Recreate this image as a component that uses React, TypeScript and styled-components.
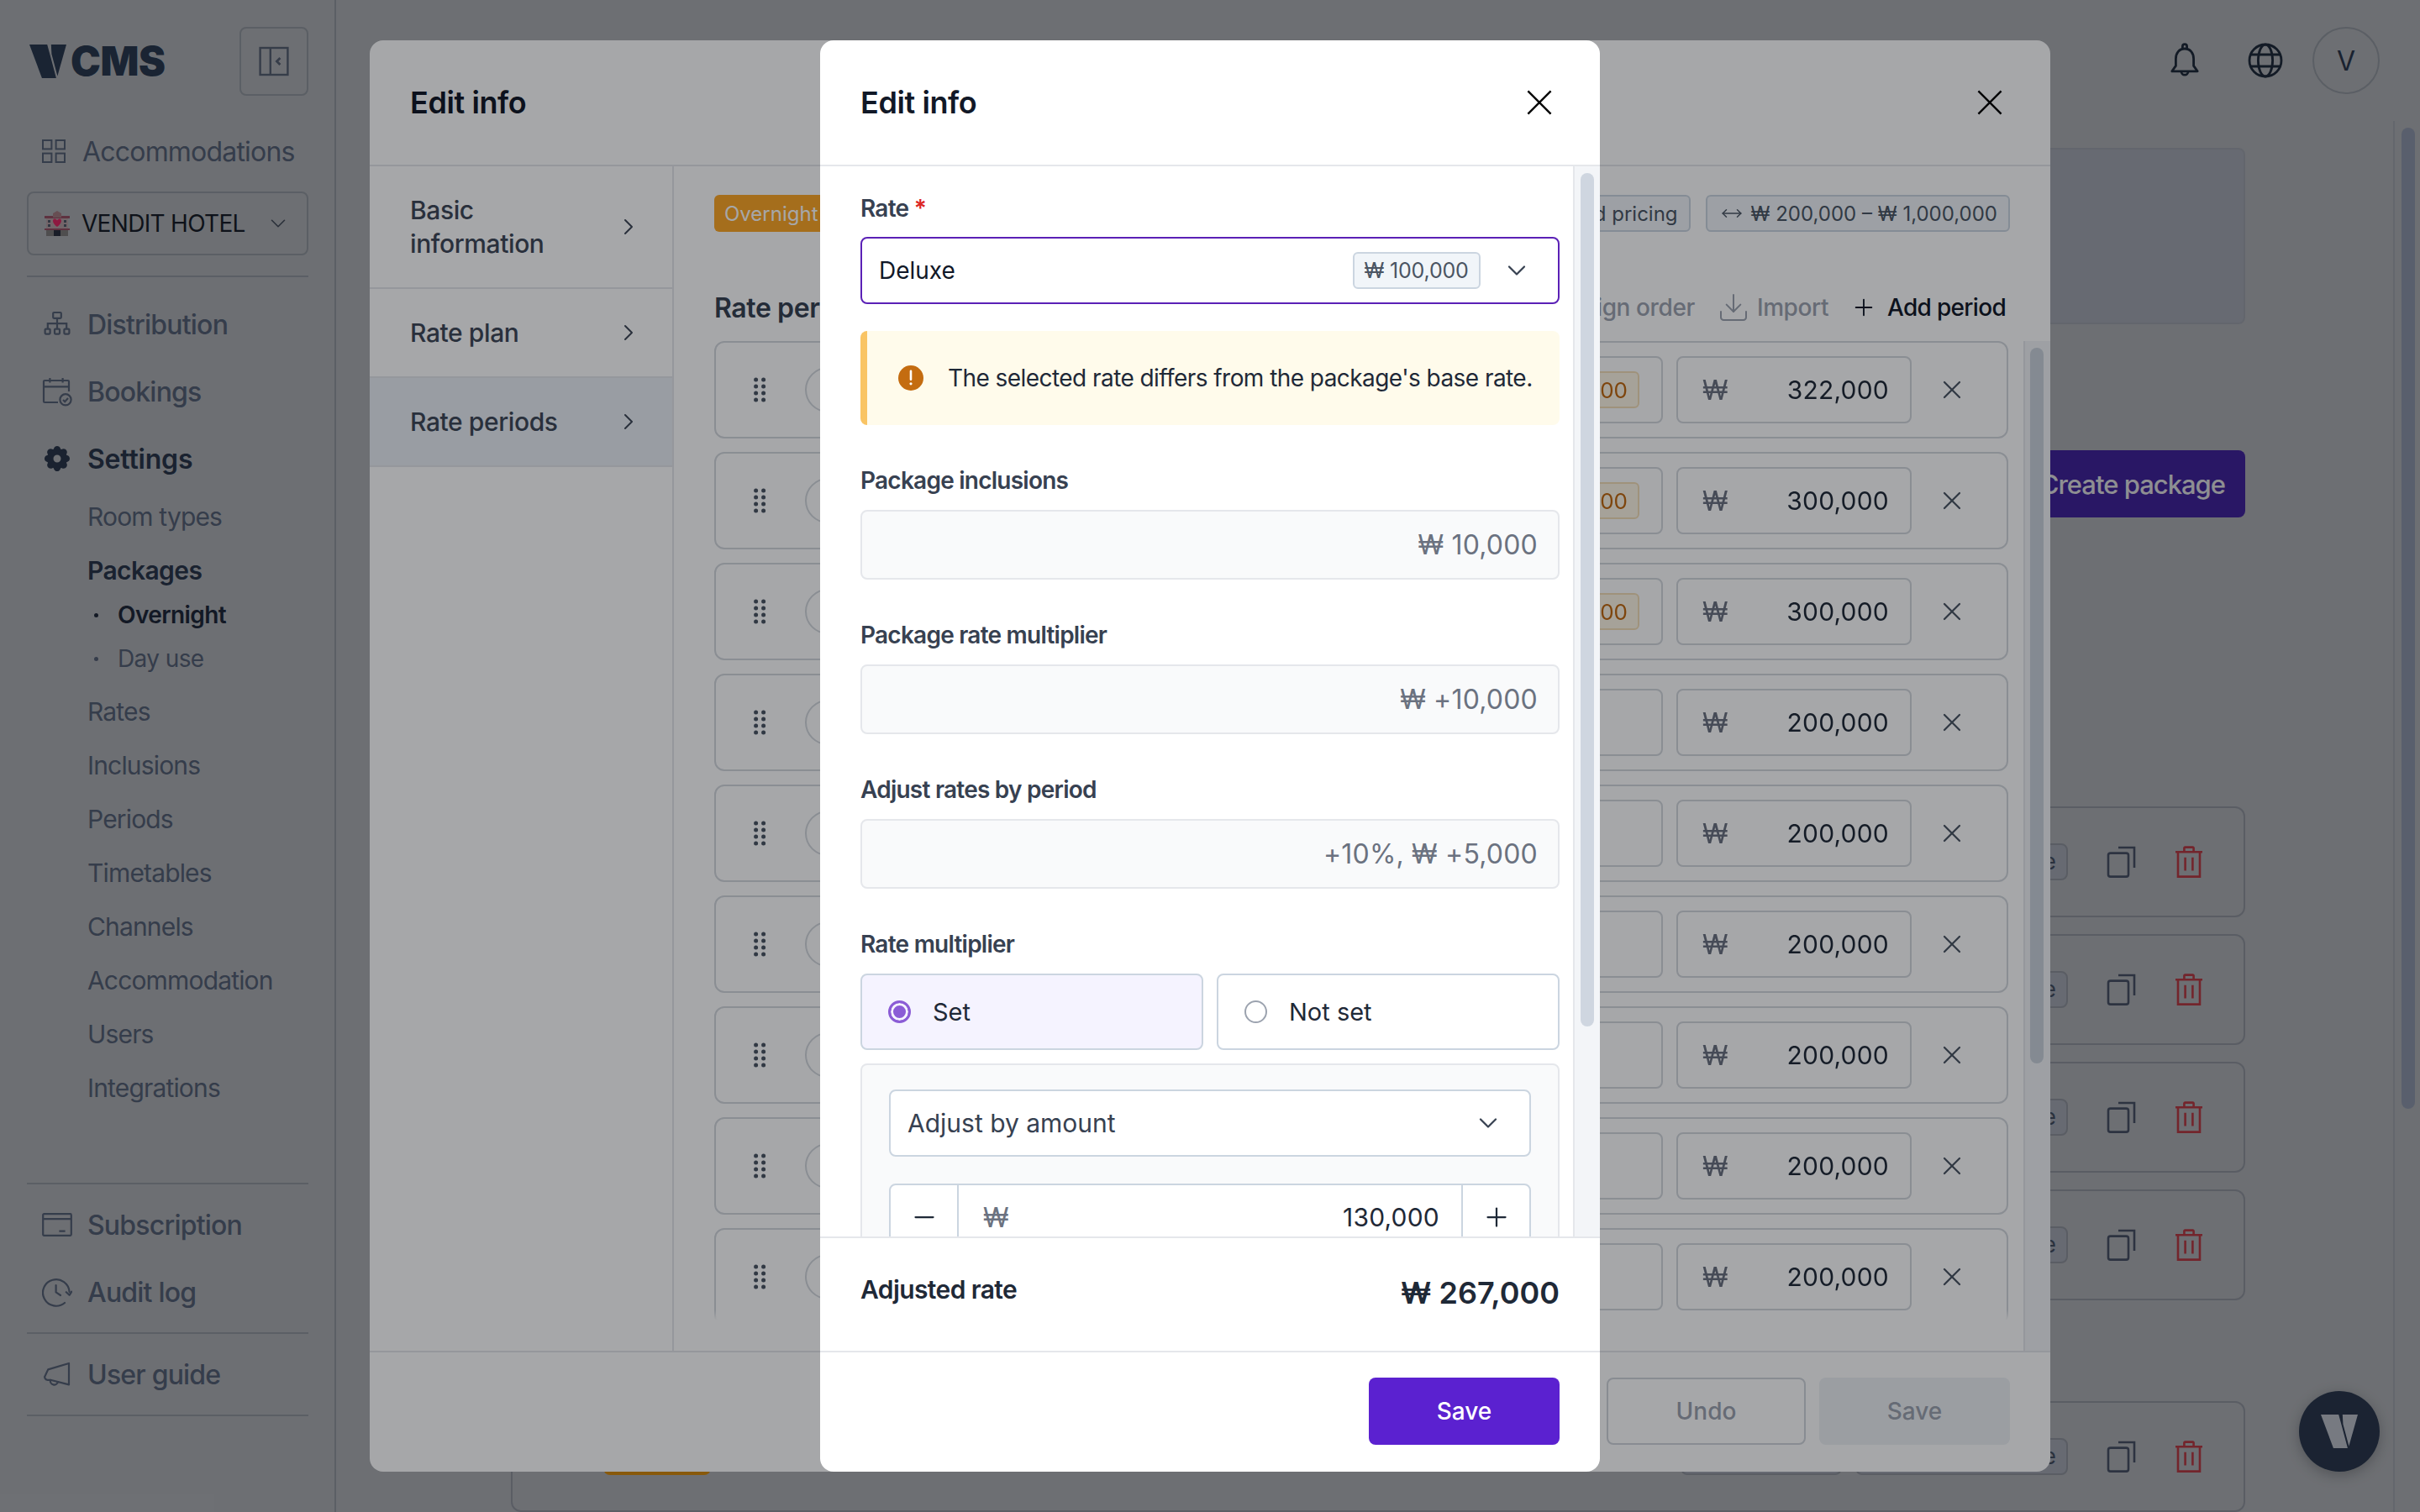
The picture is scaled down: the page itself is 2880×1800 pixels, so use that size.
import styled, { createGlobalStyle } from "styled-components";
import { ChevronDown, ChevronRight, Download, Minus, MoveHorizontal, Plus, X } from "lucide-react";
import { TbSettingsFilled } from "react-icons/tb";

const GlobalStyle = createGlobalStyle`
    * { box-sizing: border-box; }
    html, body { margin: 0; padding: 0; background: #6e6f73; }
    body { font-family: Inter, "Noto Sans", sans-serif; overflow: hidden; }
`

const periodRows = [
    { price: "322,000", badge: "₩ 22,000" },
    { price: "300,000", badge: "₩ 10,000" },
    { price: "300,000", badge: "₩ 10,000" },
    { price: "200,000" },
    { price: "200,000" },
    { price: "200,000" },
    { price: "200,000" },
    { price: "200,000" },
    { price: "200,000" },
];

const subItems = ["Timetables", "Channels", "Accommodation", "Users", "Integrations"];

const GridIcon = () => (
    <svg width="14" height="14" viewBox="0 0 14 14" fill="none" stroke="currentColor" strokeWidth="1">
        <rect x="0.5" y="0.5" width="5.2" height="5.2" />
        <rect x="8.3" y="0.5" width="5.2" height="5.2" />
        <rect x="0.5" y="8.3" width="5.2" height="5.2" />
        <rect x="8.3" y="8.3" width="5.2" height="5.2" />
    </svg>
);

const DistributionIcon = () => (
    <svg width="18" height="16" viewBox="0 0 18 16" fill="none" stroke="currentColor" strokeWidth="1.1">
        <rect x="6.6" y="1" width="4.8" height="3.4" rx="0.5" />
        <path d="M9 4.4V10.6M3.4 10.6V7.6H14.6V10.6" />
        <rect x="1.8" y="10.8" width="3" height="3" rx="0.5" />
        <rect x="7.5" y="10.8" width="3" height="3" rx="0.5" />
        <rect x="13.2" y="10.8" width="3" height="3" rx="0.5" />
    </svg>
);

const CalendarCheckIcon = () => (
    <svg width="18" height="18" viewBox="0 0 18 18" fill="none" stroke="currentColor" strokeWidth="1.1">
        <path d="M9.5 15.5H1.6A0.6 0.6 0 0 1 1 14.900V3.100A0.6 0.6 0 0 1 1.600 2.500H15.400A0.6 0.6 0 0 1 16 3.100V9" />
        <path d="M1 6.200H16M4.700 1V3.800M12.300 1V3.800" />
        <circle cx="14" cy="13.900" r="3.300" />
        <path d="M12.500 14L13.600 15.100L15.500 13" />
    </svg>
);

const CardIcon = () => (
    <svg width="18" height="14" viewBox="0 0 18 14" fill="none" stroke="currentColor" strokeWidth="1.1">
        <rect x="0.600" y="0.600" width="16.800" height="12.800" rx="0.600" />
        <path d="M0.600 3.600H17.400M10.200 10.800H13.800" />
    </svg>
);

const AuditIcon = () => (
    <svg width="18" height="18" viewBox="0 0 18 18" fill="none" stroke="currentColor" strokeWidth="1.1" strokeLinecap="round" strokeLinejoin="round">
        <path d="M16.300 9A7.900 7.900 0 1 0 13.500 15.500" />
        <path d="M8.300 5V9.200L11 11M14.400 9.100L16.300 10.900L17.600 8.800" />
    </svg>
);

const MegaphoneIcon = () => (
    <svg width="18" height="16" viewBox="0 0 18 16" fill="none" stroke="currentColor" strokeWidth="1.1" strokeLinejoin="round" strokeLinecap="round">
        <path d="M16 1.500V14.200L5 11.400H3.300A1.700 1.700 0 0 1 2 8.600L3.600 5.200L16 1.500Z" />
        <path d="M5 11.400A2.300 2.300 0 0 0 9.500 12.500" />
    </svg>
);

const PanelCollapseIcon = () => (
    <svg width="18" height="18" viewBox="0 0 18 18" fill="none" stroke="currentColor" strokeWidth="1.2">
        <rect x="0.800" y="1" width="16.400" height="16" />
        <path d="M6.900 1V17" />
        <path d="M12.700 7L10.700 9L12.700 11" strokeWidth="1.400" />
    </svg>
);

const HotelEmoji = () => (
    <svg width="16" height="16" viewBox="0 0 32 32">
        <path d="M1 7H31V10H1Z" fill="#a9586c" />
        <path d="M11 4L16 1L21 4V9H11Z" fill="#b98a8f" />
        <rect x="3" y="10" width="26" height="19" fill="#cdb3b5" />
        <path d="M16 20C10 16 10 10.500 13 10.500C14.500 10.500 15.500 11.500 16 12.500C16.500 11.500 17.500 10.500 19 10.500C22 10.500 22 16 16 20Z" fill="#ff2a6d" />
        <path d="M5 12H8V15H5ZM5 17H8V20H5ZM24 12H27V15H24ZM24 17H27V20H24Z" fill="#5a6270" />
        <rect x="1" y="22" width="30" height="2" fill="#a9586c" />
        <path d="M3 24H29V31H3Z" fill="#8d8a86" />
        <path d="M12 24H20V31H12Z" fill="#2c3240" />
    </svg>
);

const VMark = ({ size, color }: { size: number; color: string }) => (
    <svg width={size} height={size * 0.925} viewBox="0 0 133 123" fill={color}>
        <path d="M0 0H64L76 44L97 123H46Z" />
        <path d="M78 0H133L101 113L80 35Z" />
    </svg>
);

const BellIcon = () => (
    <svg width="24" height="24" viewBox="0 0 24 24" fill="none" stroke="currentColor" strokeWidth="1.400" strokeLinejoin="round">
        <path d="M12 5C8.500 5 6.700 7.800 6.700 11V15.200L4.400 18.400H19.600L17.300 15.200V11C17.300 7.800 15.500 5 12 5Z" />
        <path d="M10.700 5V3.600A1.300 1.300 0 0 1 13.300 3.600V5" />
        <path d="M10 18.600A2 2 0 0 0 14 18.600" />
    </svg>
);

const GlobeIcon = () => (
    <svg width="24" height="24" viewBox="0 0 24 24" fill="none" stroke="currentColor" strokeWidth="1.400">
        <circle cx="12" cy="12" r="9.500" />
        <ellipse cx="12" cy="12" rx="4.300" ry="9.500" />
        <path d="M3.500 8.500H20.500M3.500 15.500H20.500" />
    </svg>
);

const CopyIcon = () => (
    <svg width="18" height="19" viewBox="0 0 18 19" fill="none" stroke="currentColor" strokeWidth="1.300">
        <rect x="1" y="4.300" width="12" height="14" rx="1.300" />
        <path d="M7 1H16.500V13" />
    </svg>
);

const TrashIcon = () => (
    <svg width="16" height="19" viewBox="0 0 16 19" fill="none" stroke="currentColor" strokeWidth="1.300">
        <path d="M0 3.600H16M5.200 3.600V1.300A0.500 0.500 0 0 1 5.700 0.800H10.300A0.500 0.500 0 0 1 10.800 1.300V3.600" />
        <path d="M1.500 3.600V18.300H14.500V3.600" />
        <path d="M5.800 6.900V14.800M10.200 6.900V14.800" />
    </svg>
);

const DragIcon = () => (
    <svg width="9" height="16" viewBox="0 0 9 16" fill="currentColor">
        {[2, 6, 10, 14].map((y) => (
            <g key={y}>
                <circle cx="1.800" cy={y} r="1.250" />
                <circle cx="6.300" cy={y} r="1.250" />
            </g>
        ))}
    </svg>
);

const WarnIcon = () => (
    <svg width="15" height="15" viewBox="0 0 15 15">
        <circle cx="7.500" cy="7.500" r="7.500" fill="#c46c10" />
        <path d="M7.500 3.400V8.400" stroke="#fff" strokeWidth="1.300" strokeLinecap="round" />
        <circle cx="7.500" cy="10.900" r="0.800" fill="#fff" />
    </svg>
);

const CloseIcon = () => (
    <svg width="16" height="16" viewBox="0 0 16 16" fill="none" stroke="currentColor" strokeWidth="1.200">
        <path d="M1.200 1.200L14.800 14.800M14.800 1.200L1.200 14.800" />
    </svg>
);

const App = () => {
    return (
        <Screen>
            <GlobalStyle />
            <Sidebar>
                <SidebarHead>
                    <Logo>
                        <VMark size={22} color="#2d3e54" />
                        <LogoText>CMS</LogoText>
                    </Logo>
                    <CollapseButton><PanelCollapseIcon /></CollapseButton>
                </SidebarHead>
                <TopLink><GridIcon />Accommodations</TopLink>
                <HotelSelect>
                    <HotelEmoji />
                    <HotelName>VENDIT HOTEL</HotelName>
                    <ChevronDown size={15} strokeWidth={1.3} color="#4b5360" />
                </HotelSelect>
                <SideDivider $top={12} />
                <NavGroup>
                    <NavItem><IconSlot><DistributionIcon /></IconSlot>Distribution</NavItem>
                    <NavItem><IconSlot><CalendarCheckIcon /></IconSlot>Bookings</NavItem>
                    <NavItem $active><IconSlot><TbSettingsFilled size={22} /></IconSlot>Settings</NavItem>
                </NavGroup>
                <SubList>
                    <SubItem>Room types</SubItem>
                    <SubItem $active>Packages</SubItem>
                    <NestedList>
                        <NestedItem $active>Overnight</NestedItem>
                        <NestedItem>Day use</NestedItem>
                    </NestedList>
                    <SubItem>Rates</SubItem>
                    <SubItem>Inclusions</SubItem>
                    <SubItem>Periods</SubItem>
                    {subItems.map((item) => (
                        <SubItem key={item}>{item}</SubItem>
                    ))}
                </SubList>
                <SidebarFoot>
                    <SideDivider $top={0} />
                    <FootGroup>
                        <NavItem><IconSlot><CardIcon /></IconSlot>Subscription</NavItem>
                        <NavItem><IconSlot><AuditIcon /></IconSlot>Audit log</NavItem>
                    </FootGroup>
                    <SideDivider $top={0} />
                    <FootGroup>
                        <NavItem><IconSlot><MegaphoneIcon /></IconSlot>User guide</NavItem>
                    </FootGroup>
                    <SideDivider $top={0} />
                </SidebarFoot>
            </Sidebar>

            <Main>
                <Topbar>
                    <TopIcons>
                        <BellIcon />
                        <GlobeIcon />
                    </TopIcons>
                    <Avatar>V</Avatar>
                </Topbar>
                <MainBody>
                    <Content>
                        <InfoPanel />
                        <SectionHead>
                            <CreateButton>Create package</CreateButton>
                        </SectionHead>
                        <PackageList>
                            {[0, 1, 2, 3].map((i) => (
                                <PackageCard key={i}>
                                    <TypeChip>Overnight</TypeChip>
                                    <CardChip $width={96}>₩ 100,000</CardChip>
                                    <CardChip $width={126.500}>Base rate</CardChip>
                                    <CardTools><CopyIcon /><TrashSlot><TrashIcon /></TrashSlot></CardTools>
                                </PackageCard>
                            ))}
                        </PackageList>
                        <LastCard>
                            <TypeChip>Overnight</TypeChip>
                            <CardChip $width={96}>₩ 100,000</CardChip>
                            <CardChip $width={126.500}>Base rate</CardChip>
                            <CardTools><CopyIcon /><TrashSlot><TrashIcon /></TrashSlot></CardTools>
                        </LastCard>
                    </Content>
                    <PageTrack><PageThumb /></PageTrack>
                </MainBody>
            </Main>

            <Widget><VMark size={22} color="#d6dae1" /></Widget>
            <Backdrop $alpha={0.15} />

            <OuterDialog>
                <DialogHead>
                    <DialogTitle>Edit info</DialogTitle>
                    <CloseIcon />
                </DialogHead>
                <OuterBody>
                    <SideTabs>
                        <SideTab><TabLabel>Basic information</TabLabel><ChevronRight size={16} strokeWidth={1.500} /></SideTab>
                        <SideTab><TabLabel>Rate plan</TabLabel><ChevronRight size={16} strokeWidth={1.500} /></SideTab>
                        <SideTab $active><TabLabel>Rate periods</TabLabel><ChevronRight size={16} strokeWidth={1.500} /></SideTab>
                    </SideTabs>
                    <PeriodPane>
                        <ChipRow>
                            <OrangeChip>Overnight</OrangeChip>
                            <GreyChip $pushed>Fixed pricing</GreyChip>
                            <GreyChip><MoveHorizontal size={13} strokeWidth={1.300} />₩ 200,000 – ₩ 1,000,000</GreyChip>
                        </ChipRow>
                        <PeriodHead>
                            <PeriodTitle>Rate periods</PeriodTitle>
                            <PeriodActions>
                                <GhostAction>Assign order</GhostAction>
                                <GhostAction><Download size={20} strokeWidth={1.200} />Import</GhostAction>
                                <AddAction><Plus size={16} strokeWidth={1.400} />Add period</AddAction>
                            </PeriodActions>
                        </PeriodHead>
                        <PeriodArea>
                            <PeriodList>
                                {periodRows.map((row, index) => (
                                    <PeriodRow key={index}>
                                        <DragSlot><DragIcon /></DragSlot>
                                        <RowCircle />
                                        <RowField>
                                            {row.badge && <RowBadge>{row.badge}</RowBadge>}
                                        </RowField>
                                        <PriceField>
                                            <Won>₩</Won>
                                            <PriceValue>{row.price}</PriceValue>
                                        </PriceField>
                                        <RowRemove><X size={18} strokeWidth={1.500} /></RowRemove>
                                    </PeriodRow>
                                ))}
                            </PeriodList>
                            <PaneTrack><PaneThumb /></PaneTrack>
                        </PeriodArea>
                    </PeriodPane>
                </OuterBody>
                <DialogFoot>
                    <UndoButton>Undo</UndoButton>
                    <DisabledSave>Save</DisabledSave>
                </DialogFoot>
            </OuterDialog>

            <Backdrop $alpha={0.352} />

            <InnerDialog>
                <DialogHead>
                    <DialogTitle>Edit info</DialogTitle>
                    <CloseIcon />
                </DialogHead>
                <InnerScroll>
                    <Form>
                        <Label>Rate <Req>*</Req></Label>
                        <RateSelect>
                            <RateName>Deluxe</RateName>
                            <RatePrice>₩ 100,000</RatePrice>
                            <ChevronDown size={18} strokeWidth={1.500} color="#374151" />
                        </RateSelect>
                        <Alert>
                            <WarnIcon />
                            <AlertText>The selected rate differs from the package's base rate.</AlertText>
                        </Alert>
                        <Field>
                            <Label>Package inclusions</Label>
                            <ReadOnlyInput>₩ 10,000</ReadOnlyInput>
                        </Field>
                        <Field>
                            <Label>Package rate multiplier</Label>
                            <ReadOnlyInput>₩ +10,000</ReadOnlyInput>
                        </Field>
                        <Field>
                            <Label>Adjust rates by period</Label>
                            <ReadOnlyInput>+10%, ₩ +5,000</ReadOnlyInput>
                        </Field>
                        <Field>
                            <Label>Rate multiplier</Label>
                            <RadioRow>
                                <RadioCard $checked><RadioDot $checked />Set</RadioCard>
                                <RadioCard><RadioDot />Not set</RadioCard>
                            </RadioRow>
                        </Field>
                        <AdjustPanel>
                            <AdjustSelect>
                                Adjust by amount
                                <ChevronDown size={18} strokeWidth={1.500} color="#374151" />
                            </AdjustSelect>
                            <Stepper>
                                <StepCell><Minus size={18} strokeWidth={1.500} /></StepCell>
                                <StepValue>
                                    <Won>₩</Won>
                                    <PriceValue>130,000</PriceValue>
                                </StepValue>
                                <StepCell><Plus size={18} strokeWidth={1.500} /></StepCell>
                            </Stepper>
                        </AdjustPanel>
                    </Form>
                    <FormTrack><FormThumb /></FormTrack>
                </InnerScroll>
                <Summary>
                    <SummaryLabel>Adjusted rate</SummaryLabel>
                    <SummaryValue>₩ 267,000</SummaryValue>
                </Summary>
                <DialogFoot>
                    <SaveButton>Save</SaveButton>
                </DialogFoot>
            </InnerDialog>
        </Screen>
    );
}

export default App;

const Screen = styled.div`
    zoom: 2;
    position: relative;
    display: flex;
    width: 1440px;
    height: 900px;
    overflow: hidden;
    background-color: #c4c6c8;
    color: #1f2937;
    font-size: 14px;
`

const Sidebar = styled.aside`
    width: 200px;
    flex-shrink: 0;
    display: flex;
    flex-direction: column;
    padding: 16px 15.500px 57px 16px;
    border-right: 1px solid #a3a8ae;
`

const SidebarHead = styled.div`
    display: flex;
    align-items: center;
    justify-content: space-between;
    padding-left: 1.500px;
`

const Logo = styled.div`
    display: flex;
    align-items: center;
    gap: 2.500px;
    color: #2d3e54;
`

const LogoText = styled.span`
    font-size: 24px;
    line-height: 24px;
    font-weight: 900;
    letter-spacing: -0.200px;
`

const CollapseButton = styled.button`
    width: 41px;
    height: 41px;
    display: flex;
    align-items: center;
    justify-content: center;
    padding: 0;
    color: #606a7c;
    background: transparent;
    border: 1px solid #a3a8ae;
    border-radius: 4px;
`

const TopLink = styled.div`
    height: 32px;
    margin-top: 17px;
    padding-left: 9px;
    display: flex;
    align-items: center;
    gap: 10px;
    font-size: 16px;
    font-weight: 400;
    letter-spacing: -0.400px;
    color: #5f6a7f;
`

const HotelSelect = styled.div`
    height: 38px;
    margin-top: 8px;
    padding: 0 9.500px 0 9px;
    display: flex;
    align-items: center;
    gap: 6.500px;
    border: 1px solid #a3a8ae;
    border-radius: 4px;
`

const HotelName = styled.span`
    flex: 1;
    font-size: 14px;
    letter-spacing: -0.350px;
    white-space: nowrap;
    color: #181d26;
`

const SideDivider = styled.div<{ $top: number }>`
    height: 1px;
    flex-shrink: 0;
    margin-top: ${(props) => props.$top}px;
    background-color: #a3a8ae;
`

const NavGroup = styled.nav`
    margin-top: 8px;
`

const NavItem = styled.div<{ $active?: boolean }>`
    height: 40px;
    padding-left: 9px;
    display: flex;
    align-items: center;
    gap: 9px;
    font-size: 16px;
    font-weight: ${(props) => (props.$active ? 600 : 500)};
    letter-spacing: ${(props) => (props.$active ? "-0.100px" : "-0.400px")};
    color: ${(props) => (props.$active ? "#2d3a4e" : "#5f6a7f")};
`

const IconSlot = styled.span`
    width: 18px;
    display: flex;
    justify-content: center;
`

const SubList = styled.div`
    margin-top: -1.500px;
`

const SubItem = styled.div<{ $active?: boolean }>`
    height: 32px;
    padding-left: 36px;
    display: flex;
    align-items: center;
    font-size: 15px;
    font-weight: ${(props) => (props.$active ? 600 : 400)};
    letter-spacing: ${(props) => (props.$active ? "-0.300px" : "-0.420px")};
    color: ${(props) => (props.$active ? "#2d3a4e" : "#5f6a7f")};
`

const NestedList = styled.div`
    margin: -2.500px 0 2.500px;
`

const NestedItem = styled.div<{ $active?: boolean }>`
    height: 26px;
    padding-left: 40px;
    display: flex;
    align-items: center;
    gap: 11.500px;
    font-size: 14px;
    font-weight: ${(props) => (props.$active ? 600 : 400)};
    letter-spacing: -0.300px;
    color: ${(props) => (props.$active ? "#222b3a" : "#5f6a7f")};

    &::before {
        content: "";
        width: 2.500px;
        height: 2.500px;
        border-radius: 50%;
        background-color: currentColor;
    }
`

const SidebarFoot = styled.div`
    margin-top: auto;
`

const FootGroup = styled.div`
    padding: 4px 0;
`

const Main = styled.main`
    flex: 1;
    min-width: 0;
    display: flex;
    flex-direction: column;
`

const Topbar = styled.header`
    height: 72px;
    flex-shrink: 0;
    padding-right: 24px;
    display: flex;
    align-items: center;
    justify-content: flex-end;
    gap: 16px;
`

const TopIcons = styled.div`
    display: flex;
    align-items: center;
    gap: 24px;
    color: #222d3d;
`

const Avatar = styled.div`
    width: 40px;
    height: 40px;
    display: flex;
    align-items: center;
    justify-content: center;
    border: 1px solid #a3a8ae;
    border-radius: 50%;
    font-size: 16px;
    color: #2d3a4e;
`

const MainBody = styled.div`
    flex: 1;
    min-height: 0;
    display: flex;
`

const Content = styled.div`
    flex: 1;
    min-width: 0;
    padding: 16px 88px 0 104px;
    overflow: hidden;
`

const InfoPanel = styled.div`
    height: 105px;
    background-color: #b9bdc6;
    border: 1px solid #b2b6be;
    border-radius: 4px;
`

const SectionHead = styled.div`
    margin-top: 75px;
    display: flex;
    justify-content: flex-end;
`

const CreateButton = styled.button`
    height: 40px;
    padding: 0 12px;
    color: #fff;
    font-family: inherit;
    font-size: 15.500px;
    font-weight: 500;
    letter-spacing: -0.500px;
    background-color: #4926af;
    border: none;
    border-radius: 4px;
`

const PackageList = styled.div`
    margin-top: 172px;
    display: flex;
    flex-direction: column;
    gap: 10px;
`

const PackageCard = styled.div`
    height: 66px;
    padding: 0 24.500px 0 54px;
    display: flex;
    align-items: center;
    gap: 8px;
    border: 1px solid #a1a5ad;
    border-radius: 6px;
`

const LastCard = styled(PackageCard)`
    margin-top: 60px;
`

const TypeChip = styled.span`
    height: 22px;
    width: 64px;
    margin-right: auto;
    background-color: #f59e0b;
    border-radius: 4px;
    font-size: 12px;
    color: #fff;
    line-height: 22px;
    text-align: center;
`

const CardChip = styled.span<{ $width: number }>`
    height: 22px;
    width: ${(props) => props.$width}px;
    padding: 0 6px;
    background-color: #b9bdc6;
    border: 1px solid #a1a5ad;
    border-radius: 4px;
    font-size: 13px;
    line-height: 20px;
    color: #4d5666;
    text-align: right;
`

const CardTools = styled.div`
    margin-left: 15px;
    display: flex;
    align-items: center;
    color: #4f5a6e;
`

const TrashSlot = styled.span`
    margin-left: 23px;
    display: flex;
    color: #cf4048;
`

const PageTrack = styled.div`
    width: 16px;
    flex-shrink: 0;
    padding: 4px 0 0 4px;
    border-left: 1px solid #b2b6be;
`

const PageThumb = styled.div`
    width: 8px;
    height: 584px;
    background-color: #a0a9bc;
    border-radius: 4px;
`

const Widget = styled.div`
    position: absolute;
    right: 24px;
    bottom: 24px;
    width: 48px;
    height: 48px;
    display: flex;
    align-items: center;
    justify-content: center;
    background-color: #2f3d53;
    border-radius: 50%;
    box-shadow: 0 2px 8px rgba(0, 0, 0, 0.25);
`

const Backdrop = styled.div<{ $alpha: number }>`
    position: absolute;
    inset: 0;
    background-color: rgba(4, 6, 12, ${(props) => props.$alpha});
`

const OuterDialog = styled.section`
    position: absolute;
    left: 220px;
    top: 24px;
    width: 1000px;
    height: 852px;
    display: flex;
    flex-direction: column;
    background-color: #fff;
    border-radius: 8px;
    overflow: hidden;
`

const InnerDialog = styled(OuterDialog)`
    left: 488px;
    width: 464px;
`

const DialogHead = styled.div`
    height: 75px;
    flex-shrink: 0;
    padding: 0 28px 0 24px;
    display: flex;
    align-items: center;
    justify-content: space-between;
    border-bottom: 1px solid #e5e7eb;
    color: #000;
`

const DialogTitle = styled.h2`
    margin: 0;
    font-size: 18px;
    font-weight: 600;
    letter-spacing: -0.200px;
    color: #111827;
`

const OuterBody = styled.div`
    flex: 1;
    min-height: 0;
    display: flex;
`

const SideTabs = styled.div`
    width: 181px;
    flex-shrink: 0;
    border-right: 1px solid #e5e7eb;
`

const SideTab = styled.div<{ $active?: boolean }>`
    padding: 16px 18px 16px 24px;
    display: flex;
    align-items: center;
    justify-content: space-between;
    border-bottom: 1px solid #e5e7eb;
    background-color: ${(props) => (props.$active ? "#ebf0f6" : "transparent")};
    color: #3f4857;
`

const TabLabel = styled.span`
    width: 110px;
    font-size: 15px;
    font-weight: 500;
    line-height: 20px;
    letter-spacing: -0.200px;
    color: #3f4857;
`

const PeriodPane = styled.div`
    flex: 1;
    min-width: 0;
    padding: 17px 0 0 24px;
    display: flex;
    flex-direction: column;
`

const ChipRow = styled.div`
    height: 22px;
    margin-right: 24px;
    display: flex;
    align-items: center;
    gap: 9px;
`

const OrangeChip = styled.span`
    height: 22px;
    padding: 0 6px;
    display: flex;
    align-items: center;
    background-color: #fda726;
    border-radius: 3px;
    font-size: 12px;
    color: #fff;
`

const GreyChip = styled.span<{ $pushed?: boolean }>`
    height: 22px;
    padding: 0 6.500px 0 8px;
    margin-left: ${(props) => (props.$pushed ? "auto" : "0")};
    display: flex;
    align-items: center;
    gap: 5px;
    background-color: #f1f5f9;
    border: 1px solid #cbd5e0;
    border-radius: 3px;
    font-size: 12px;
    color: #4b5563;
`

const PeriodHead = styled.div`
    height: 22px;
    margin: 34px 26.500px 0 0;
    display: flex;
    align-items: center;
`

const PeriodTitle = styled.h3`
    margin: 0;
    font-size: 16px;
    font-weight: 600;
    letter-spacing: -0.200px;
    color: #374151;
`

const PeriodActions = styled.div`
    margin-left: auto;
    display: flex;
    align-items: center;
    gap: 13px;
`

const GhostAction = styled.span`
    display: flex;
    align-items: center;
    gap: 4px;
    font-size: 14px;
    font-weight: 500;
    letter-spacing: -0.200px;
    color: #9ca3af;
`

const AddAction = styled(GhostAction)`
    gap: 6px;
    letter-spacing: -0.350px;
    color: #111827;
`

const PeriodArea = styled.div`
    flex: 1;
    min-height: 0;
    margin-top: 9px;
    display: flex;
`

const PeriodList = styled.div`
    flex: 1;
    min-width: 0;
    height: 583px;
    margin-right: 9px;
    display: flex;
    flex-direction: column;
    gap: 8px;
    overflow: hidden;
    mask-image: linear-gradient(to bottom, #000 calc(100% - 6px), transparent);
`

const PeriodRow = styled.div`
    height: 58px;
    flex-shrink: 0;
    padding: 0 23.500px 0 20px;
    display: flex;
    align-items: center;
    border: 1px solid #d4d8de;
    border-radius: 6px;
`

const DragSlot = styled.span`
    width: 33px;
    flex-shrink: 0;
    display: flex;
    padding-left: 2px;
    color: #4b5563;
`

const RowCircle = styled.span`
    width: 27px;
    height: 27px;
    flex-shrink: 0;
    border: 1px solid #d4d8de;
    border-radius: 50%;
`

const RowField = styled.div`
    flex: 1;
    height: 40px;
    margin-left: 8px;
    padding-right: 13px;
    display: flex;
    align-items: center;
    justify-content: flex-end;
    border: 1px solid #d4d8de;
    border-radius: 4px;
`

const RowBadge = styled.span`
    height: 22px;
    padding: 0 6px;
    display: flex;
    align-items: center;
    background-color: #fff8e6;
    border: 1px solid #f5dfb8;
    border-radius: 3px;
    font-size: 13px;
    color: #c2680f;
`

const PriceField = styled.div`
    width: 140px;
    height: 40px;
    margin-left: 8px;
    padding: 0 12.500px 0 14.500px;
    flex-shrink: 0;
    display: flex;
    align-items: center;
    justify-content: space-between;
    border: 1px solid #d4d8de;
    border-radius: 4px;
`

const Won = styled.span`
    font-size: 16px;
    color: #6b7280;
`

const PriceValue = styled.span`
    font-size: 15px;
    letter-spacing: 0.100px;
    color: #1f2937;
`

const RowRemove = styled.span`
    width: 18px;
    margin-left: 15px;
    display: flex;
    color: #4b5563;
`

const PaneTrack = styled.div`
    width: 16px;
    flex-shrink: 0;
    padding: 4px 0 0 3px;
    background-color: #f3f5f8;
    border-left: 1px solid #e5e7eb;
`

const PaneThumb = styled.div`
    width: 8px;
    height: 426px;
    background-color: #cbd2dc;
    border-radius: 4px;
`

const DialogFoot = styled.div`
    height: 72px;
    flex-shrink: 0;
    padding: 0 24px 1px;
    display: flex;
    align-items: center;
    justify-content: flex-end;
    gap: 8px;
    border-top: 1px solid #e5e7eb;
`

const UndoButton = styled.button`
    width: 118.500px;
    height: 40px;
    background: transparent;
    border: 1px solid #d1d5db;
    border-radius: 4px;
    font-family: inherit;
    font-size: 14px;
    font-weight: 500;
    color: #9ca3af;
`

const DisabledSave = styled.button`
    width: 113.500px;
    height: 40px;
    background-color: #eef1f5;
    border: none;
    border-radius: 4px;
    font-family: inherit;
    font-size: 14px;
    font-weight: 500;
    color: #9ca3af;
`

const InnerScroll = styled.div`
    flex: 1;
    min-height: 0;
    display: flex;
    overflow: hidden;
`

const Form = styled.div`
    flex: 1;
    min-width: 0;
    padding: 15px 8px 0 24px;
    overflow: hidden;
`

const Label = styled.div`
    height: 20px;
    font-size: 14px;
    font-weight: 600;
    line-height: 20px;
    letter-spacing: -0.380px;
    color: #374151;
`

const Req = styled.span`
    color: #dc2626;
`

const RateSelect = styled.div`
    height: 40px;
    margin-top: 7px;
    padding: 0 15.500px 0 10px;
    display: flex;
    align-items: center;
    border: 1px solid #5b21b6;
    border-radius: 4px;
`

const RateName = styled.span`
    flex: 1;
    font-size: 14px;
    color: #111827;
`

const RatePrice = styled.span`
    height: 22px;
    margin-right: 12.700px;
    padding: 0 6px;
    display: flex;
    align-items: center;
    background-color: #f1f5f9;
    border: 1px solid #cbd5e0;
    border-radius: 3px;
    font-size: 12.500px;
    letter-spacing: -0.100px;
    color: #4b5563;
`

const Alert = styled.div`
    height: 56px;
    margin-top: 16px;
    padding-left: 18.500px;
    display: flex;
    align-items: center;
    gap: 14.500px;
    background-color: #fffbeb;
    border-left: 4px solid #f9c464;
    border-radius: 4px;
`

const AlertText = styled.span`
    font-size: 14px;
    letter-spacing: -0.280px;
    color: #1f2937;
`

const Field = styled.div`
    margin-top: 23px;
`

const ReadOnlyInput = styled.div`
    height: 41.500px;
    margin-top: 7.500px;
    padding: 0 12px;
    display: flex;
    align-items: center;
    justify-content: flex-end;
    background-color: #f9fafb;
    border: 1px solid #e5e7eb;
    border-radius: 4px;
    font-size: 16px;
    letter-spacing: 0.100px;
    color: #6b7280;
`

const RadioRow = styled.div`
    margin-top: 7.500px;
    display: grid;
    grid-template-columns: 1fr 1fr;
    gap: 8px;
`

const RadioCard = styled.div<{ $checked?: boolean }>`
    height: 45.500px;
    padding-left: 15.500px;
    display: flex;
    align-items: center;
    gap: 13px;
    background-color: ${(props) => (props.$checked ? "#f5f3ff" : "#fff")};
    border: 1px solid #cbd5e0;
    border-radius: 4px;
    font-size: 14.500px;
    color: #1f2937;
`

const RadioDot = styled.span<{ $checked?: boolean }>`
    width: 13.500px;
    height: 13.500px;
    flex-shrink: 0;
    border-radius: 50%;
    border: ${(props) => (props.$checked ? "1.500px solid #8b5cd6" : "1.200px solid #9ca3af")};
    background-color: ${(props) => (props.$checked ? "#8b5cd6" : "#fff")};
    box-shadow: ${(props) => (props.$checked ? "inset 0 0 0 1.500px #f5f3ff" : "none")};
`

const AdjustPanel = styled.div`
    height: 140px;
    margin-top: 8px;
    padding: 14.500px 16px;
    background-color: #f9fafb;
    border: 1px solid #e5e7eb;
    border-radius: 4px;
`

const AdjustSelect = styled.div`
    height: 40px;
    padding: 0 15.500px 0 10px;
    display: flex;
    align-items: center;
    justify-content: space-between;
    background-color: #fff;
    border: 1px solid #cbd5e0;
    border-radius: 4px;
    font-size: 15px;
    color: #374151;
`

const Stepper = styled.div`
    height: 40px;
    margin-top: 16px;
    display: flex;
    background-color: #fff;
    border: 1px solid #cbd5e0;
    border-radius: 4px;
`

const StepCell = styled.span`
    width: 39.500px;
    flex-shrink: 0;
    display: flex;
    align-items: center;
    justify-content: center;
    color: #1f2937;
`

const StepValue = styled.div`
    flex: 1;
    padding: 0 13px 0 14.500px;
    display: flex;
    align-items: center;
    justify-content: space-between;
    border-left: 1px solid #cbd5e0;
    border-right: 1px solid #cbd5e0;
`

const FormTrack = styled.div`
    width: 16px;
    flex-shrink: 0;
    padding: 4px 0 0 3.500px;
    background-color: #f3f5f8;
    border-left: 1px solid #e5e7eb;
`

const FormThumb = styled.div`
    width: 8px;
    height: 508px;
    background-color: #cfd6e0;
    border-radius: 4px;
`

const Summary = styled.div`
    height: 68px;
    flex-shrink: 0;
    padding: 0 24px;
    display: flex;
    align-items: center;
    justify-content: space-between;
    border-top: 1px solid #e5e7eb;
`

const SummaryLabel = styled.span`
    margin-bottom: 6px;
    font-size: 15px;
    font-weight: 600;
    letter-spacing: -0.300px;
    color: #1f2937;
`

const SummaryValue = styled.span`
    margin-bottom: 2px;
    font-size: 18px;
    font-weight: 600;
    color: #1f2937;
`

const SaveButton = styled.button`
    width: 113.500px;
    height: 40px;
    background-color: #5b21d0;
    border: none;
    border-radius: 4px;
    font-family: inherit;
    font-size: 14px;
    font-weight: 500;
    color: #fff;
`
